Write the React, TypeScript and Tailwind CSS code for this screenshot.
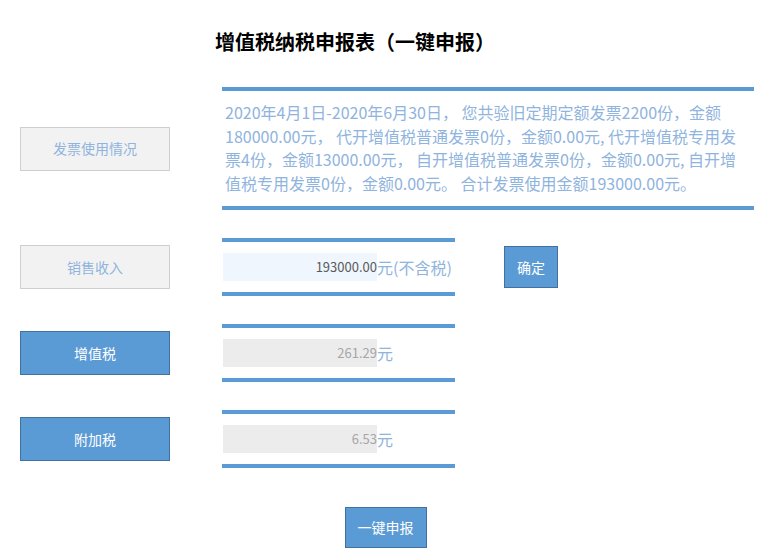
import type { ReactNode } from "react";

const font = "font-['Microsoft_YaHei','Noto_Sans_CJK_SC',sans-serif]";

const invoiceLines = [
  "2020年4月1日-2020年6月30日， 您共验旧定期定额发票2200份，金额",
  "180000.00元， 代开增值税普通发票0份，金额0.00元, 代开增值税专用发",
  "票4份，金额13000.00元， 自开增值税普通发票0份，金额0.00元, 自开增",
  "值税专用发票0份，金额0.00元。 合计发票使用金额193000.00元。",
];

function SideButton({ label, active }: { label: string; active?: boolean }) {
  return (
    <div
      className={
        active
          ? "flex h-[44px] w-[150px] shrink-0 items-center justify-center border border-[#41719c] bg-[#5b9bd5] text-[14px] text-white"
          : "flex h-[44px] w-[150px] shrink-0 items-center justify-center border border-[#cfcfcf] bg-[#f2f2f2] text-[14px] text-[#8fb4de]"
      }
    >
      {label}
    </div>
  );
}

function Bar() {
  return <div className="h-[4px] w-full bg-[#5b9bd5]" />;
}

function Framed({ width, children }: { width: string; children: ReactNode }) {
  return (
    <div className={`ml-[52px] ${width}`}>
      <Bar />
      {children}
      <Bar />
    </div>
  );
}

function AmountField({ value, unit, light }: { value: string; unit: string; light?: boolean }) {
  return (
    <div className="flex items-center py-[11px]">
      <div
        className={
          light
            ? "ml-[1px] flex h-[28px] w-[154px] items-center justify-end bg-[#eff6fd] text-[13px] text-[#5a5a5a]"
            : "ml-[1px] flex h-[28px] w-[154px] items-center justify-end bg-[#ececec] text-[13px] text-[#a6a6a6]"
        }
      >
        {value}
      </div>
      <span className="text-[16px] leading-[28px] text-[#8fb4de]">{unit}</span>
    </div>
  );
}

export default function App() {
  return (
    <div className={`min-h-[559px] w-[771px] bg-white ${font}`}>
      <h1 className="pl-[215px] pt-[28px] text-[20px] font-bold leading-[28px] text-black">
        增值税纳税申报表（一键申报）
      </h1>

      <div className="mt-[31px] flex items-center pl-[20px]">
        <SideButton label="发票使用情况" />
        <Framed width="w-[532px]">
          <div className="pb-[11px] pl-[3px] pt-[10px] text-[16px] leading-[23.5px] text-[#8fb4de]">
            {invoiceLines.map((line) => (
              <div key={line} className="whitespace-nowrap">
                {line}
              </div>
            ))}
          </div>
        </Framed>
      </div>

      <div className="mt-[28px] flex items-center pl-[20px]">
        <SideButton label="销售收入" />
        <Framed width="w-[233px]">
          <AmountField value="193000.00" unit="元(不含税)" light />
        </Framed>
        <button className="ml-[49px] h-[42px] w-[54px] border border-[#41719c] bg-[#5b9bd5] text-[14px] text-white">
          确定
        </button>
      </div>

      <div className="mt-[28px] flex items-center pl-[20px]">
        <SideButton label="增值税" active />
        <Framed width="w-[233px]">
          <AmountField value="261.29" unit="元" />
        </Framed>
      </div>

      <div className="mt-[28px] flex items-center pl-[20px]">
        <SideButton label="附加税" active />
        <Framed width="w-[233px]">
          <AmountField value="6.53" unit="元" />
        </Framed>
      </div>

      <div className="flex justify-center pt-[39px]">
        <button className="h-[41px] w-[82px] border border-[#41719c] bg-[#5b9bd5] text-[14px] text-white">
          一键申报
        </button>
      </div>
    </div>
  );
}
